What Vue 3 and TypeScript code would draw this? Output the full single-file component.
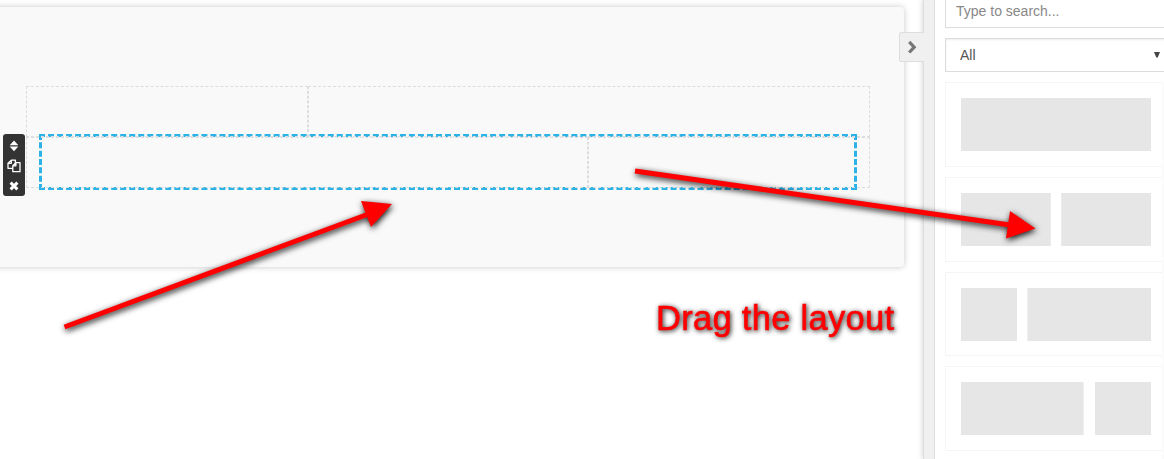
<script setup lang="ts">
interface Block {
  x: number
  width: number
}

const rows: string[][] = [
  ['third', 'two-thirds'],
  ['two-thirds', 'third'],
]

const layouts: Block[][] = [
  [{ x: 0, width: 190 }],
  [{ x: 0, width: 89.8 }, { x: 100.2, width: 89.8 }],
  [{ x: 0, width: 56 }, { x: 66.4, width: 123.6 }],
  [{ x: 0, width: 122.6 }, { x: 134, width: 56 }],
]
</script>

<template>
  <div class="builder">
    <main class="canvas">
      <section class="panel">
        <div class="grid">
          <div class="selection"></div>
          <div v-for="(row, i) in rows" :key="i" class="grid-row">
            <div v-for="cell in row" :key="cell" class="cell" :class="cell"></div>
          </div>
        </div>
      </section>
      <div class="row-tools">
        <svg viewBox="0 0 14 14" class="tool"><path d="M7 1.6 11.3 6.2H2.7ZM2.7 7.6H11.3L7 12.2Z" fill="#fff" /></svg>
        <svg viewBox="0 0 14 14" class="tool">
          <g fill="#333" stroke="#fff" stroke-width="1.3" stroke-linejoin="round">
            <path d="M4.3 1.1H8.4V9.3H1V4.3ZM4.3 1.1V4.3H1" />
            <path d="M8.9 3.6H13V12.7H5.8V6.8ZM8.9 3.6V6.8H5.8" />
          </g>
        </svg>
        <svg viewBox="0 0 14 14" class="tool"><path d="m3.6 3.6 6.8 6.8M10.4 3.6l-6.8 6.8" stroke="#fff" stroke-width="3" /></svg>
      </div>
    </main>

    <aside class="drawer">
      <button class="toggle" type="button" aria-label="Toggle">
        <svg viewBox="0 0 12 14"><path d="M2.2 1.9 7.2 7.2 2.2 12.5" fill="none" stroke="#777" stroke-width="3.2" /></svg>
      </button>
      <div class="rail"></div>
      <div class="library">
        <div class="search">Type to search...</div>
        <div class="filter">
          <span>All</span>
          <svg viewBox="0 0 6 6"><path d="M0 0H6L3.7 5.5H2.3Z" fill="#444" /></svg>
        </div>
        <div class="cards">
          <div v-for="(blocks, i) in layouts" :key="i" class="card">
            <svg viewBox="0 0 190 53">
              <rect v-for="b in blocks" :key="b.x" :x="b.x" y="0" :width="b.width" height="53" fill="#e6e6e6" />
            </svg>
          </div>
        </div>
      </div>
    </aside>

    <svg class="notes" viewBox="0 0 1164 459">
      <g class="arrow">
        <path d="M64.5 327 370 213.5" />
        <path class="head" d="M361 201 392 204 371 227Z" />
      </g>
      <g class="arrow">
        <path d="M635 171 1010 225" />
        <path class="head" d="M1010 211 1035.5 228.5 1006 238.5Z" />
      </g>
      <text x="656" y="329.6" textLength="238" lengthAdjust="spacing">Drag the layout</text>
    </svg>
  </div>
</template>

<style>
body {
  overflow: hidden;
  background: #fff;
}
</style>

<style scoped>
.builder {
  position: relative;
  display: flex;
  width: 1164px;
  height: 459px;
  overflow: hidden;
  font: 14px "Liberation Sans", Arial, sans-serif;
}
.builder * {
  box-sizing: border-box;
}
.canvas {
  position: relative;
  width: 923px;
  padding-top: 7px;
}
.panel {
  width: 914px;
  height: 260px;
  margin-left: -10px;
  padding: 79px 34px 0 36px;
  border-radius: 4px;
  background: #f9f9f9;
  box-shadow: 0 0 6px rgba(0, 0, 0, 0.22);
}
.grid {
  position: relative;
  width: 844px;
}
.grid-row {
  position: relative;
  display: flex;
  height: 51px;
}
.cell {
  border: 1px dashed #ddd;
}
.third {
  flex: 1 1 0;
}
.two-thirds {
  flex: 2 1 0;
}
.selection {
  position: absolute;
  left: 13px;
  top: 48px;
  width: 818px;
  height: 56px;
  border: 3px dashed #2bb3e7;
}
.row-tools {
  position: absolute;
  left: 3px;
  top: 134px;
  display: flex;
  flex-direction: column;
  align-items: center;
  gap: 6px;
  width: 22px;
  height: 62px;
  padding-top: 5px;
  border-radius: 3px;
  background: #333;
}
.tool {
  display: block;
  flex: none;
  width: 14px;
  height: 14px;
}
.drawer {
  position: relative;
  display: flex;
  width: 241px;
  height: 459px;
  background: #fff;
  box-shadow: 0 0 6px rgba(0, 0, 0, 0.2);
}
.rail {
  width: 12px;
  border: solid #ddd;
  border-width: 0 1px;
  background: #f0f0f0;
}
.toggle {
  position: absolute;
  left: -24px;
  top: 32px;
  display: flex;
  align-items: center;
  width: 25px;
  height: 30px;
  padding: 0 0 0 7px;
  border: 1px solid #ddd;
  border-right: 0;
  border-radius: 3px 0 0 3px;
  background: #f0f0f0;
}
.toggle svg {
  display: block;
  flex: none;
  width: 12px;
  height: 14px;
}
.library {
  width: 229px;
  padding-left: 10px;
  overflow: hidden;
}
.search,
.filter {
  width: 222px;
  height: 34px;
  border: 1px solid #ddd;
  line-height: 32px;
}
.search {
  margin-top: -6px;
  padding-left: 10px;
  color: #888;
}
.filter {
  display: flex;
  align-items: center;
  gap: 178px;
  margin-top: 10px;
  padding-left: 14px;
  color: #555;
  box-shadow: inset 0 1px 2px rgba(0, 0, 0, 0.08);
}
.filter span {
  width: 16px;
}
.filter svg {
  width: 6px;
  height: 6px;
}
.cards {
  display: flex;
  flex-direction: column;
  gap: 10px;
  width: 219px;
  height: 400px;
  margin-top: 10.33px;
  border-right: 2px solid #fbfbfb;
  overflow: hidden;
}
.card {
  flex: none;
  width: 222px;
  height: 84.67px;
  padding: 15px;
  border: 1px solid #f5f5f5;
}
.card svg {
  display: block;
  width: 190px;
  height: 53px;
}
.notes {
  position: absolute;
  inset: 0;
  width: 1164px;
  height: 459px;
  pointer-events: none;
}
.arrow {
  fill: none;
  stroke: #f00;
  stroke-width: 5;
  filter: drop-shadow(1px 2px 3px rgba(0, 0, 0, 0.95));
}
.arrow .head {
  fill: #f00;
  stroke: none;
}
.notes text {
  font-size: 34.5px;
  fill: #f00;
  stroke: #f00;
  stroke-width: 0.6;
  filter: drop-shadow(1px 1px 2.5px rgba(0, 0, 0, 0.9));
}
</style>
